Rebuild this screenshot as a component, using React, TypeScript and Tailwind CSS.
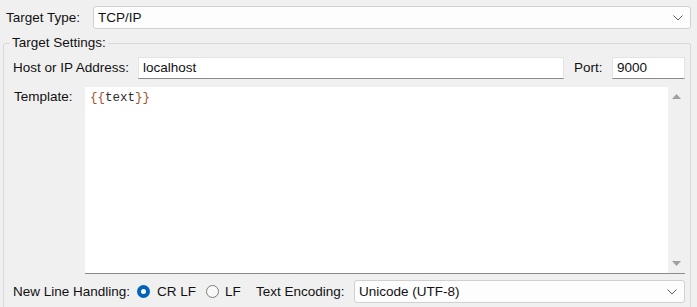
import React from "react"

function Chevron() {
  return (
    <svg width="10" height="6" viewBox="0 0 10 6" className="flex-none">
      <polyline points="0.5,0.5 5,5 9.5,0.5" fill="none" stroke="#5f5f5f" strokeWidth="1" />
    </svg>
  )
}

function Select({ value }: { value: string }) {
  return (
    <div className="flex-1 h-[23px] flex items-center justify-between bg-[#fdfdfd] border border-[#d0d0d0] rounded-[3px] pl-[4px] pr-[7px]">
      <span>{value}</span>
      <Chevron />
    </div>
  )
}

function Radio({ checked }: { checked?: boolean }) {
  if (checked) {
    return (
      <span className="flex-none w-[13px] h-[13px] rounded-full bg-[#0062b8] flex items-center justify-center">
        <span className="w-[5px] h-[5px] rounded-full bg-white" />
      </span>
    )
  }
  return <span className="flex-none w-[13px] h-[13px] rounded-full border border-[#7e7e7e] bg-[#f8f8f8]" />
}

export default function App() {
  return (
    <div
      className="w-[697px] h-[307px] overflow-hidden bg-[#f0f0f0] text-[13.5px] leading-[16px] text-[#111]"
      style={{ fontFamily: '"Liberation Sans", Arial, sans-serif' }}
    >
      <div className="flex items-center pt-[6px] pl-[6px] pr-[6px]">
        <span className="w-[87px] flex-none">Target Type:</span>
        <Select value="TCP/IP" />
      </div>

      <fieldset className="ml-[3px] mr-[6px] mt-[6px] border border-[#d9d9d9] rounded-[2px] pl-[9px] pr-[5px] pt-[6px] pb-[20px]">
        <legend className="-ml-[3px] px-[2px] leading-[16px]">Target Settings:</legend>

        <div className="flex items-center">
          <span className="w-[125px] flex-none">Host or IP Address:</span>
          <div className="flex-1 h-[22px] flex items-center bg-white border border-[#e3e3e3] border-b-[#8a8a8a] pl-[4px]">
            localhost
          </div>
          <span className="ml-[10px] w-[38px] flex-none">Port:</span>
          <div className="w-[73px] flex-none h-[22px] flex items-center bg-white border border-[#e3e3e3] border-b-[#8a8a8a] pl-[4px]">
            9000
          </div>
        </div>

        <div className="flex mt-[8px]">
          <span className="w-[72px] flex-none pl-[1px] pt-[2px]">Template:</span>
          <div className="flex-1 h-[187px] flex bg-white border-b border-[#8a8a8a]">
            <div
              className="flex-1 pl-[5px] pt-[3px] text-[12.5px] leading-[16px]"
              style={{ fontFamily: '"Liberation Mono", "Courier New", monospace' }}
            >
              <span className="text-[#a0522d]">{"{{"}</span>
              <span className="text-[#2b2b2b]">text</span>
              <span className="text-[#a0522d]">{"}}"}</span>
            </div>
            <div className="w-[17px] flex-none bg-[#f0f0f0] flex flex-col items-center justify-between py-[7px]">
              <svg width="9" height="5" viewBox="0 0 9 5">
                <polygon points="0,5 4.5,0 9,5" fill="#a0a0a0" />
              </svg>
              <svg width="9" height="5" viewBox="0 0 9 5">
                <polygon points="0,0 9,0 4.5,5" fill="#a0a0a0" />
              </svg>
            </div>
          </div>
        </div>

        <div className="flex items-center mt-[6px]">
          <span className="w-[124px] flex-none">New Line Handling:</span>
          <Radio checked />
          <span className="ml-[7px] w-[49px] flex-none">CR LF</span>
          <Radio />
          <span className="ml-[6px] w-[31px] flex-none">LF</span>
          <span className="w-[98px] flex-none">Text Encoding:</span>
          <Select value="Unicode (UTF-8)" />
        </div>
      </fieldset>
    </div>
  )
}
